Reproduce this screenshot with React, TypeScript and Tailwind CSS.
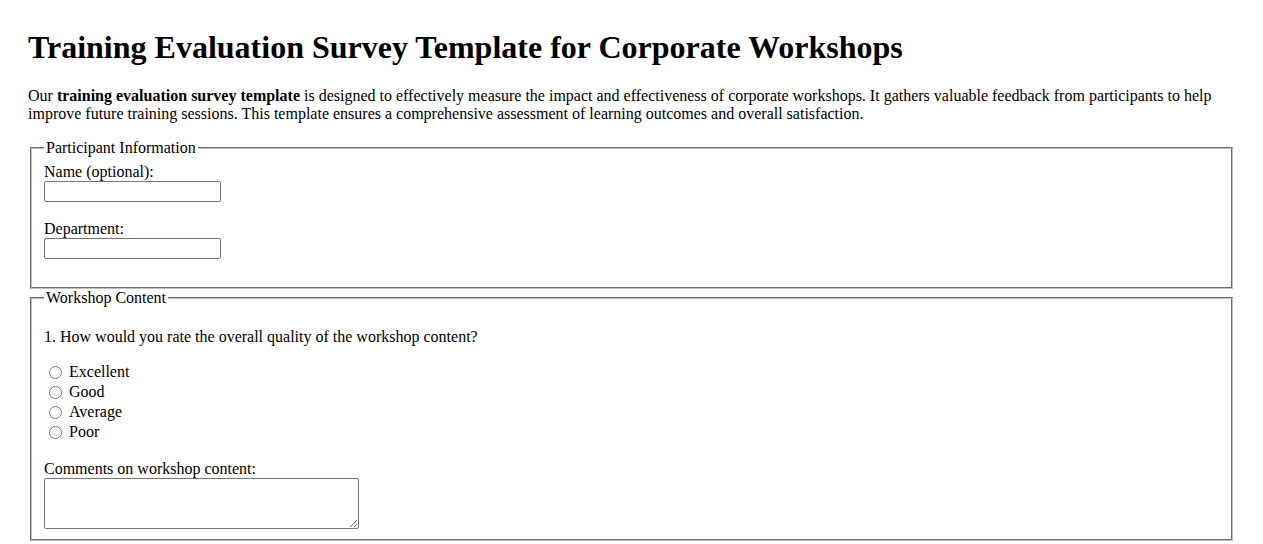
export default function App() {
  return (
    <div className="min-h-screen bg-white px-[28px] pb-[20px] pt-[29px] font-['Liberation_Serif','Times_New_Roman',serif] text-[16px] leading-[normal] text-black">
      {/* 제목 */}
      <h1 className="mb-[21px] text-[32px] font-bold leading-[normal]">
        Training Evaluation Survey Template for Corporate Workshops
      </h1>
      <p className="mb-[16px]">
        Our <strong className="font-bold">training evaluation survey template</strong> is designed to
        effectively measure the impact and effectiveness of corporate workshops. It gathers valuable
        feedback from participants to help improve future training sessions. This template ensures a
        comprehensive assessment of learning outcomes and overall satisfaction.
      </p>

      {/* 참가자 정보 */}
      <fieldset className="mx-[2px] border-2 border-[#c0c0c0] px-[12px] pb-[10px] pt-[5.6px] [border-style:groove]">
        <legend className="px-[2px]">Participant Information</legend>
        <div className="mb-[18px]">
          <label htmlFor="name" className="block">
            Name (optional):
          </label>
          <input
            id="name"
            type="text"
            className="block h-[21px] w-[177px] rounded-[2px] border border-[#767676] px-[2px]"
          />
        </div>
        <div className="mb-[18px]">
          <label htmlFor="department" className="block">
            Department:
          </label>
          <input
            id="department"
            type="text"
            className="block h-[21px] w-[177px] rounded-[2px] border border-[#767676] px-[2px]"
          />
        </div>
      </fieldset>

      {/* 워크숍 내용 */}
      <fieldset className="mx-[2px] border-2 border-[#c0c0c0] px-[12px] pb-[10px] pt-[5.6px] [border-style:groove]">
        <legend className="px-[2px]">Workshop Content</legend>
        <p className="my-[16px]">1. How would you rate the overall quality of the workshop content?</p>
        <div className="mb-[18px]">
          {["Excellent", "Good", "Average", "Poor"].map((opt) => (
            <label key={opt} className="flex h-[20px] items-center">
              <input type="radio" name="quality" value={opt} className="mb-0 ml-[5px] mr-[7px] mt-0" />
              {opt}
            </label>
          ))}
        </div>
        <label htmlFor="comments" className="block">
          Comments on workshop content:
        </label>
        <textarea
          id="comments"
          className="block h-[51px] w-[315px] rounded-[2px] border border-[#767676] px-[2px]"
        />
      </fieldset>
    </div>
  );
}
